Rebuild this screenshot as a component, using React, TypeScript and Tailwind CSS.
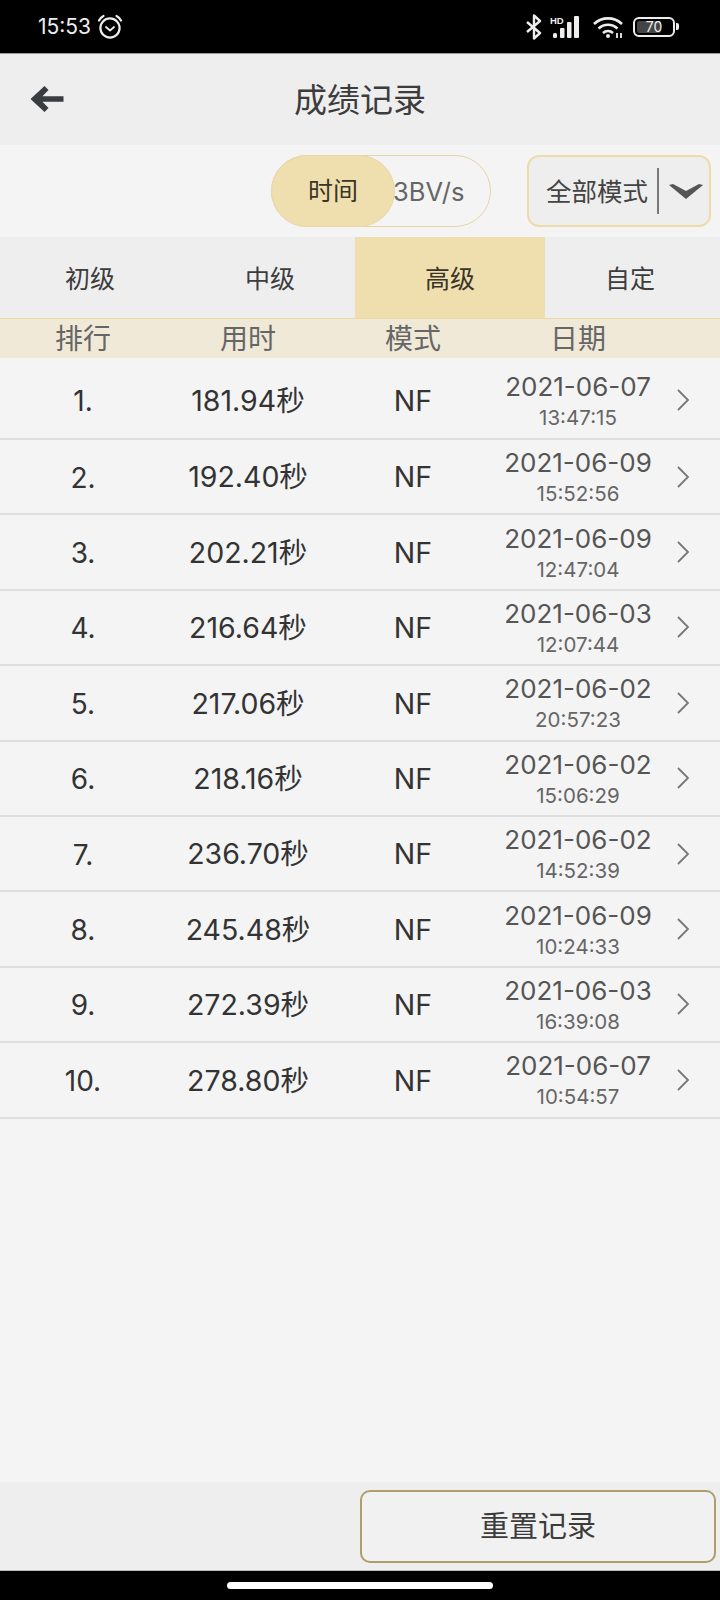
import { Fragment } from "react";

const rows = [
  ["1.", "181.94秒", "2021-06-07", "13:47:15"],
  ["2.", "192.40秒", "2021-06-09", "15:52:56"],
  ["3.", "202.21秒", "2021-06-09", "12:47:04"],
  ["4.", "216.64秒", "2021-06-03", "12:07:44"],
  ["5.", "217.06秒", "2021-06-02", "20:57:23"],
  ["6.", "218.16秒", "2021-06-02", "15:06:29"],
  ["7.", "236.70秒", "2021-06-02", "14:52:39"],
  ["8.", "245.48秒", "2021-06-09", "10:24:33"],
  ["9.", "272.39秒", "2021-06-03", "16:39:08"],
  ["10.", "278.80秒", "2021-06-07", "10:54:57"],
];

const font = { fontFamily: 'Inter, "Noto Sans CJK SC", sans-serif' };

function StatusBar() {
  return (
    <div className="h-[54px] bg-black border-b border-[#999] flex items-center justify-between pl-[38px] pr-[41px] text-[#eee]">
      <div className="flex items-center gap-[6px]">
        <span className="text-[21px] leading-none">15:53</span>
        <svg width="26" height="26" viewBox="0 0 26 26" fill="none" stroke="currentColor" strokeWidth="2.2">
          <circle cx="13" cy="14" r="9.6" />
          <path d="M9 13l4 3.5 4-3.5" strokeWidth="1.8" strokeLinecap="round" strokeLinejoin="round" />
          <path d="M2 6.5C3 4.5 4.500 3 6.500 2M24 6.500C23 4.500 21.500 3 19.500 2" strokeLinecap="round" />
        </svg>
      </div>
      <div className="flex items-center">
        <svg width="18" height="26" viewBox="0 0 18 26" fill="none" stroke="currentColor" strokeWidth="2.400" className="mr-[7px]">
          <path d="M2 8l13 11-6 5.500V1.500l6 5.500L2 18" strokeLinejoin="round" />
        </svg>
        <svg width="34" height="24" viewBox="0 0 34 24" fill="currentColor" className="mr-[8px]">
          <text x="0" y="9" fontSize="9.500" fontWeight="700" fill="currentColor" style={{ fontFamily: '"Liberation Sans", sans-serif' }}>HD</text>
          <rect x="3" y="18" width="4" height="5" rx="1.500" />
          <rect x="10" y="13" width="4.500" height="10" rx="1" />
          <rect x="17" y="7" width="4.500" height="16" rx="1" />
          <rect x="24" y="1" width="5" height="22" rx="1" />
        </svg>
        <svg width="32" height="24" viewBox="0 0 32 24" fill="none" stroke="currentColor" strokeWidth="2.600" className="mr-[9px]">
          <path d="M2 9c8-7.500 20-7.500 28 0" />
          <path d="M6.500 13.500c5.500-5 13.500-5 19 0" />
          <path d="M11 18c3-2.500 7-2.500 10 0" />
          <circle cx="16" cy="21" r="2" fill="currentColor" stroke="none" />
          <path d="M25 23v-5M29 23v-5" strokeWidth="1.800" />
        </svg>
        <div className="relative w-[42px] h-[20px] border-2 border-[#eee] rounded-[6px] overflow-hidden flex items-center justify-center">
          <div className="absolute left-[2px] top-[2px] bottom-[2px] w-[24px] bg-[#444] rounded-[2px]" />
          <span className="relative text-[14px] leading-none">70</span>
        </div>
        <div className="w-[3px] h-[7px] bg-[#eee] rounded-r-[2px] ml-[1px]" />
      </div>
    </div>
  );
}

export default function App() {
  return (
    <div className="w-[720px] h-[1600px] bg-[#f4f4f5] flex flex-col text-[#333]" style={font}>
      <StatusBar />

      {/* header */}
      <div className="relative h-[91px] bg-[#eeeeee] flex items-center justify-center">
        <svg width="34" height="28" viewBox="0 0 34 28" fill="#3a3d3f" className="absolute left-[30px] top-[31px]">
          <path d="M14.500 1l4 4-6 6.200h21v5.600h-21l6 6.200-4 4L0.500 14z" />
        </svg>
        <span className="text-[33px] leading-none text-[#3c3c3c] mt-[2px]">成绩记录</span>
      </div>

      {/* mode filters */}
      <div className="h-[92px] flex items-center justify-end pr-[9px]">
        <div className="relative w-[220px] h-[72px] border border-[#e5d5a0] rounded-[36px] flex items-center mr-[36px]">
          <div className="w-[124px] h-[72px] -ml-px bg-[#efdfae] border border-[#e8d8a4] rounded-[36px] flex items-center justify-center pt-[2px] text-[25px] text-[#3a3528]">时间</div>
          <span className="text-[25.500px] text-[#666] pt-[2px] -ml-[2px]">3BV/s</span>
        </div>
        <div className="w-[184px] h-[72px] bg-[#eeeeee] border-2 border-[#ecdcaa] rounded-[12px] flex items-center pl-[17px]">
          <span className="text-[25.500px] leading-none text-[#444] pt-[2px]">全部模式</span>
          <div className="w-[2px] h-[46px] bg-[#777] ml-[9px]" />
          <svg width="34" height="20" viewBox="0 0 34 20" fill="#555" className="ml-[10px] mt-[2px]">
            <path d="M0 3l4-1 13 7 13-7 4 1-17 14z" />
          </svg>
        </div>
      </div>

      {/* level tabs */}
      <div className="h-[82px] bg-[#eeeeee] grid grid-cols-4 text-[25px] text-[#3c3c3c] border-b border-[#ebd9a5]">
        <div className="flex items-center justify-center pt-[4px]">初级</div>
        <div className="flex items-center justify-center pt-[4px]">中级</div>
        <div className="flex items-center justify-center pt-[4px] bg-[#efdfae] -mx-[5px] text-[#3a3528]">高级</div>
        <div className="flex items-center justify-center pt-[4px]">自定</div>
      </div>

      {/* table header */}
      <div className="h-[39px] bg-[#f0e9d8] grid grid-cols-[166px_164px_166px_164px] text-[28px] leading-none text-[#666] items-center text-center pt-[1px]">
        <div>排行</div>
        <div>用时</div>
        <div>模式</div>
        <div>日期</div>
      </div>

      {/* rows */}
      <div>
        {rows.map((r, i) => (
          <Fragment key={r[0]}>
            <div className={`grid grid-cols-[166px_164px_166px_164px_60px] items-center text-center border-b-2 border-[#dedede] ${i === 0 ? "h-[82px] pt-[4px]" : "h-[75.4px]"}`}>
              <div className="text-[28px] leading-none text-[#333] pt-[2px]">{r[0]}</div>
              <div className="text-[28.500px] leading-none text-[#333] pt-[2px]">{r[1]}</div>
              <div className="text-[28.500px] leading-none text-[#333] pt-[2px]">NF</div>
              <div className="flex flex-col items-center -mt-[2px]">
                <span className="text-[26px] leading-[36px] text-[#555]">{r[2]}</span>
                <span className="text-[20.500px] leading-[25px] text-[#666]">{r[3]}</span>
              </div>
              <svg width="14" height="24" viewBox="0 0 14 24" fill="none" stroke="#777" strokeWidth="1.800" className="ml-[16px]">
                <path d="M2 2l10 10L2 22" />
              </svg>
            </div>
          </Fragment>
        ))}
      </div>

      <div className="flex-1" />

      {/* footer */}
      <div className="h-[88px] bg-[#eeeeee] flex items-center justify-end pr-[4px]">
        <button className="w-[356px] h-[73px] border-2 border-[#b09c6c] rounded-[10px] bg-[#f1f1f1] text-[29px] text-[#3c3c3c] leading-none pt-[1px]">重置记录</button>
      </div>

      <div className="h-[30px] bg-black border-t border-[#bbb] flex items-center justify-center">
        <div className="w-[266px] h-[7px] bg-white rounded-full" />
      </div>
    </div>
  );
}
